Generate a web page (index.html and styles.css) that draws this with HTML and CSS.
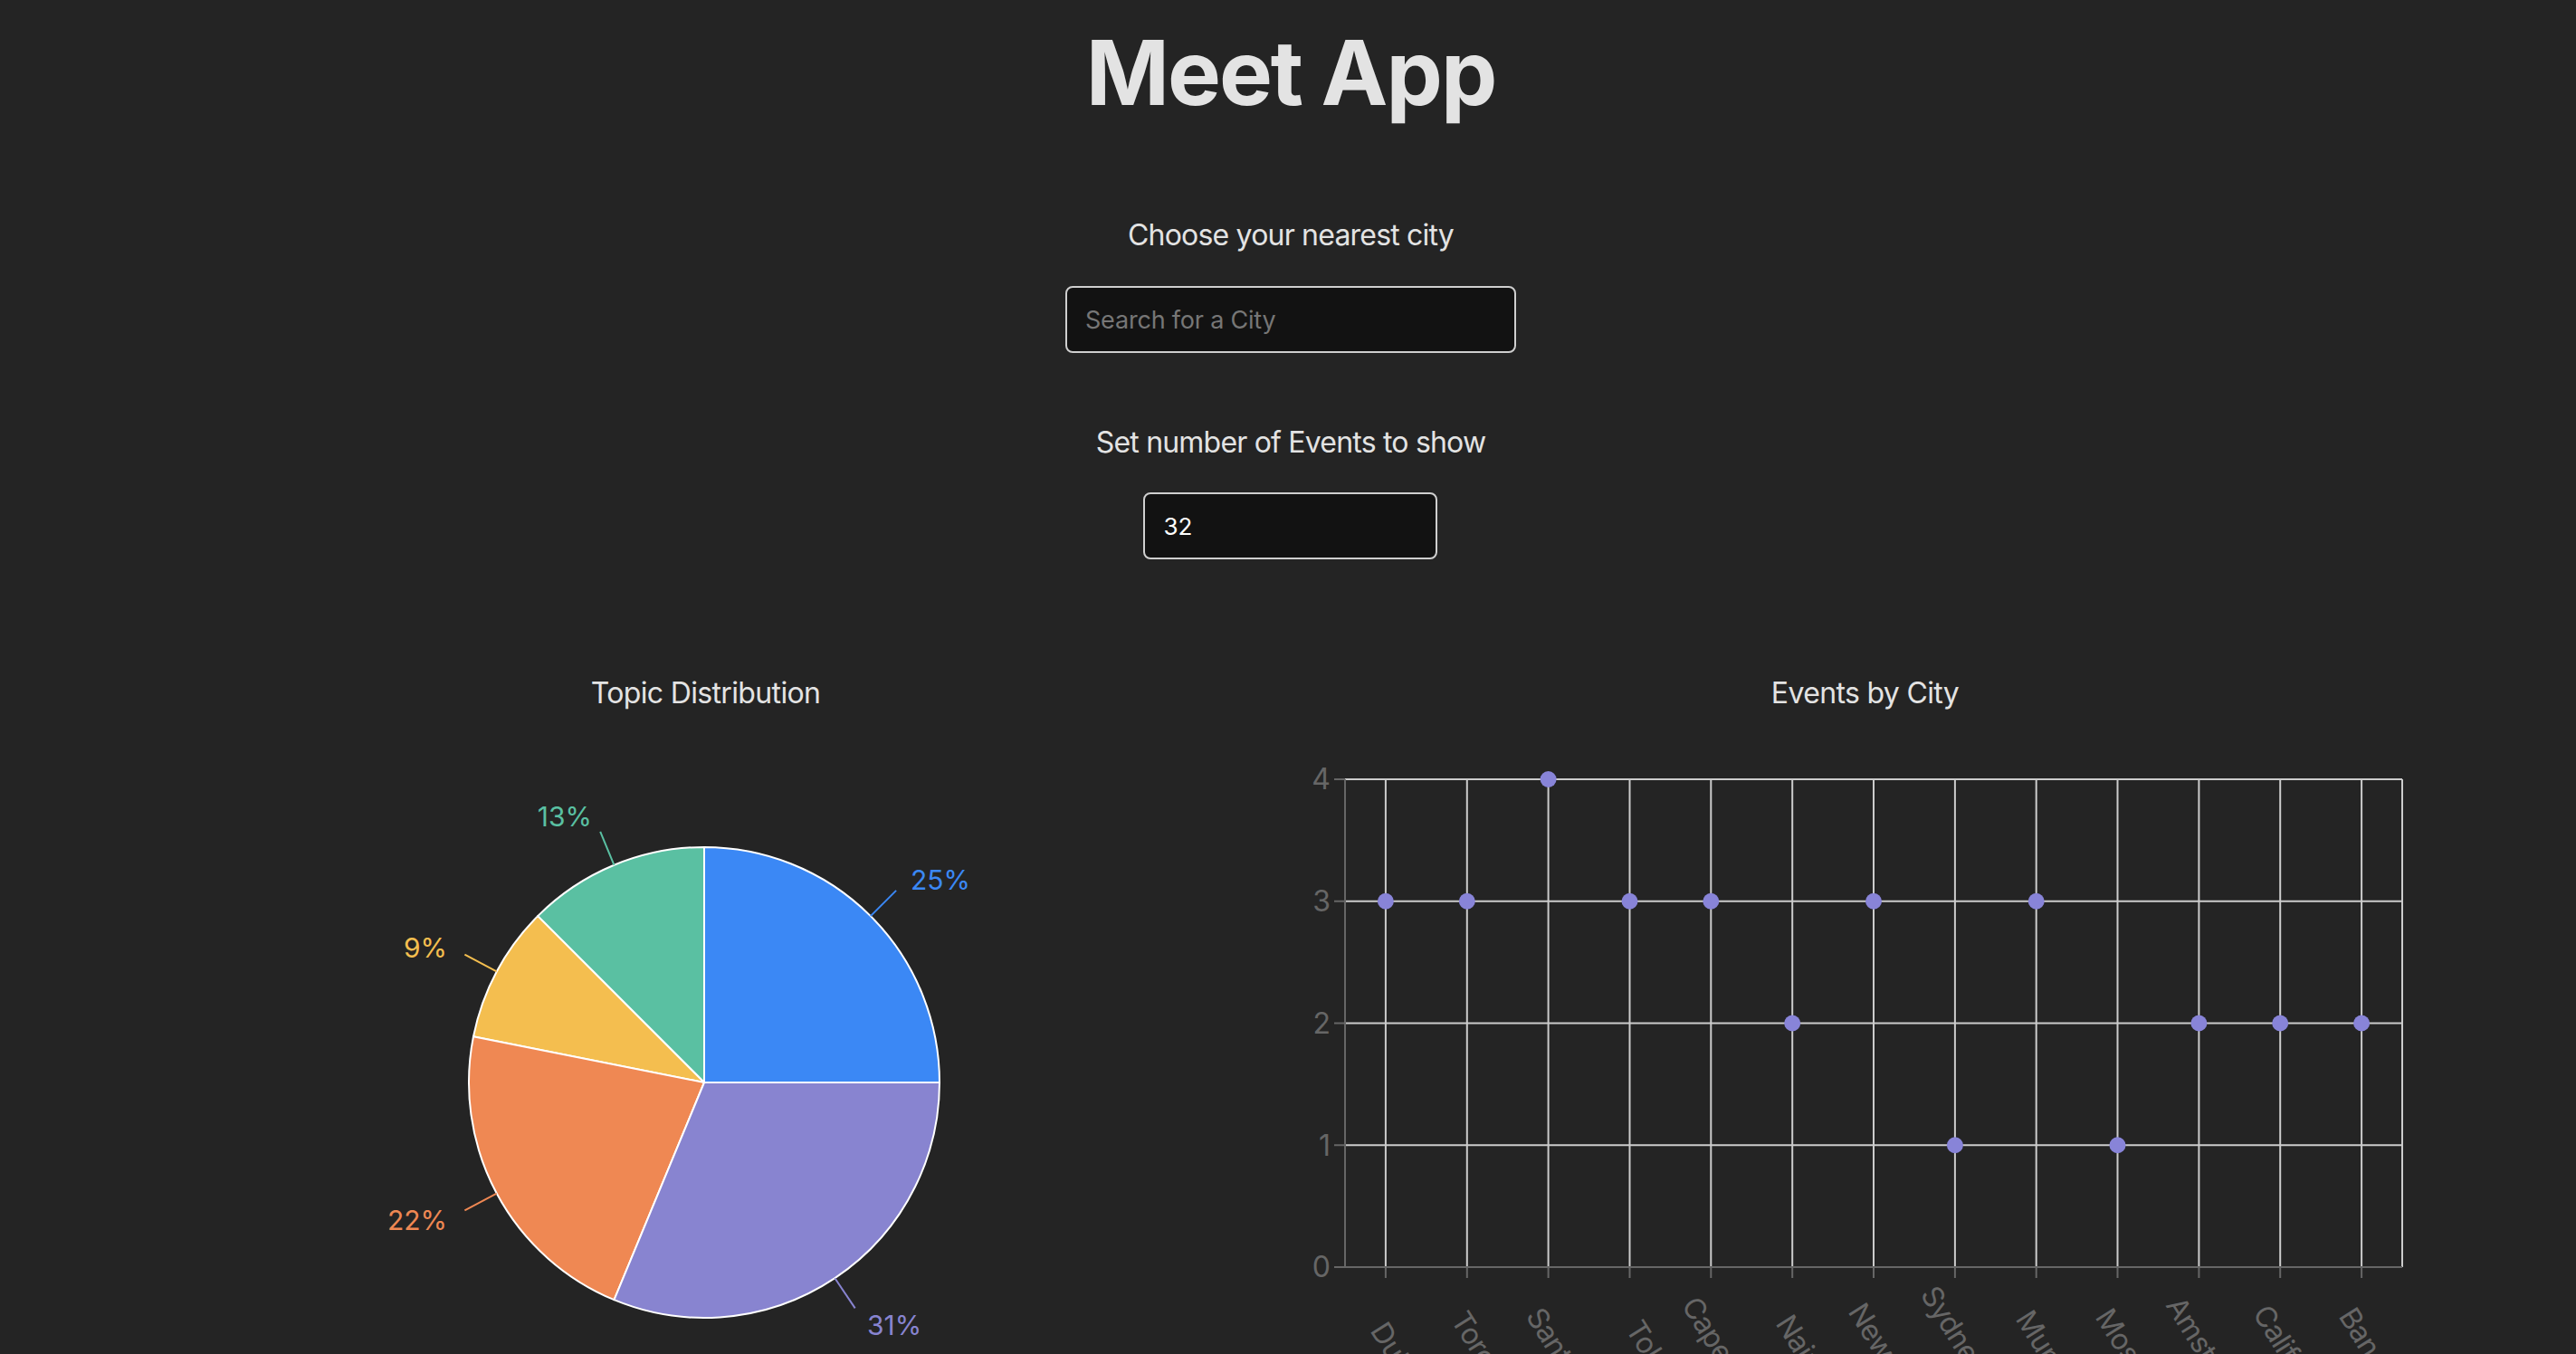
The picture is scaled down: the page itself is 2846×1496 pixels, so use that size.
FILE: index.html
```html
<!DOCTYPE html>
<html lang="en">
<head>
<meta charset="utf-8">
<title>Meet App</title>
<link rel="stylesheet" href="styles.css">
</head>
<body>
<div class="app">
  <div class="controls">
    <h1 class="app-title">Meet App</h1>
    <div class="field city-search">
      <label class="field-label" for="city">Choose your nearest city</label>
      <input id="city" class="text-input city-input" type="text" placeholder="Search for a City">
    </div>
    <div class="field number-events">
      <label class="field-label" for="num">Set number of Events to show</label>
      <input id="num" class="text-input num-input" type="text" value="32">
    </div>
  </div>

  <div class="charts">
    <section class="chart">
      <h2 class="chart-title">Topic Distribution</h2>
      <svg class="chart-svg" width="1281" height="706" viewBox="0 0 1281 706">
        <g class="pie">
          <path fill="#3b88f5" d="M639,406 L899,406 A260,260 0 0,0 639,146 Z"/>
          <path fill="#5ac0a2" d="M639,406 L639,146 A260,260 0 0,0 455.15,222.15 Z"/>
          <path fill="#f4be4f" d="M639,406 L455.15,222.15 A260,260 0 0,0 384,355.28 Z"/>
          <path fill="#ef8853" d="M639,406 L384,355.28 A260,260 0 0,0 539.5,646.2 Z"/>
          <path fill="#8884d0" d="M639,406 L539.5,646.2 A260,260 0 0,0 899,406 Z"/>
        </g>
        <g class="pie-lines">
          <line stroke="#3b88f5" x1="822.85" y1="222.15" x2="851.13" y2="193.87"/>
          <line stroke="#5ac0a2" x1="539.5" y1="165.8" x2="524.2" y2="128.8"/>
          <line stroke="#f4be4f" x1="409.7" y1="283.4" x2="374.4" y2="264.6"/>
          <line stroke="#ef8853" x1="409.7" y1="528.6" x2="374.4" y2="547.4"/>
          <line stroke="#8884d0" x1="783.4" y1="622.2" x2="805.7" y2="655.4"/>
        </g>
        <g class="pie-labels">
          <text fill="#3b88f5" x="867" y="193">25%</text>
          <text fill="#5ac0a2" x="515" y="123" text-anchor="end">13%</text>
          <text fill="#f4be4f" x="355" y="268" text-anchor="end">9%</text>
          <text fill="#ef8853" x="355" y="569" text-anchor="end">22%</text>
          <text fill="#8884d0" x="819" y="685">31%</text>
        </g>
      </svg>
    </section>

    <section class="chart">
      <h2 class="chart-title">Events by City</h2>
      <svg class="chart-svg" width="1281" height="706" viewBox="0 0 1281 706">
        <g class="grid">
          <line x1="66" y1="71" x2="1234" y2="71"/>
          <line x1="66" y1="205.75" x2="1234" y2="205.75"/>
          <line x1="66" y1="340.5" x2="1234" y2="340.5"/>
          <line x1="66" y1="475.25" x2="1234" y2="475.25"/>
          <line x1="110.9" y1="71" x2="110.9" y2="610"/>
          <line x1="200.8" y1="71" x2="200.8" y2="610"/>
          <line x1="290.6" y1="71" x2="290.6" y2="610"/>
          <line x1="380.5" y1="71" x2="380.5" y2="610"/>
          <line x1="470.3" y1="71" x2="470.3" y2="610"/>
          <line x1="560.2" y1="71" x2="560.2" y2="610"/>
          <line x1="650" y1="71" x2="650" y2="610"/>
          <line x1="739.9" y1="71" x2="739.9" y2="610"/>
          <line x1="829.7" y1="71" x2="829.7" y2="610"/>
          <line x1="919.5" y1="71" x2="919.5" y2="610"/>
          <line x1="1009.4" y1="71" x2="1009.4" y2="610"/>
          <line x1="1099.2" y1="71" x2="1099.2" y2="610"/>
          <line x1="1189.1" y1="71" x2="1189.1" y2="610"/>
          <line x1="1234" y1="71" x2="1234" y2="610"/>
        </g>
        <g class="axis">
          <line x1="66" y1="71" x2="66" y2="611"/>
          <line x1="65" y1="610" x2="1234" y2="610"/>
          <line x1="54" y1="71" x2="66" y2="71"/>
          <line x1="54" y1="205.75" x2="66" y2="205.75"/>
          <line x1="54" y1="340.5" x2="66" y2="340.5"/>
          <line x1="54" y1="475.25" x2="66" y2="475.25"/>
          <line x1="54" y1="610" x2="66" y2="610"/>
          <line x1="110.9" y1="610" x2="110.9" y2="622"/>
          <line x1="200.8" y1="610" x2="200.8" y2="622"/>
          <line x1="290.6" y1="610" x2="290.6" y2="622"/>
          <line x1="380.5" y1="610" x2="380.5" y2="622"/>
          <line x1="470.3" y1="610" x2="470.3" y2="622"/>
          <line x1="560.2" y1="610" x2="560.2" y2="622"/>
          <line x1="650" y1="610" x2="650" y2="622"/>
          <line x1="739.9" y1="610" x2="739.9" y2="622"/>
          <line x1="829.7" y1="610" x2="829.7" y2="622"/>
          <line x1="919.5" y1="610" x2="919.5" y2="622"/>
          <line x1="1009.4" y1="610" x2="1009.4" y2="622"/>
          <line x1="1099.2" y1="610" x2="1099.2" y2="622"/>
          <line x1="1189.1" y1="610" x2="1189.1" y2="622"/>
        </g>
        <g class="tick-labels y-labels">
          <text x="50" y="71" dy="0.355em">4</text>
          <text x="50" y="205.75" dy="0.355em">3</text>
          <text x="50" y="340.5" dy="0.355em">2</text>
          <text x="50" y="475.25" dy="0.355em">1</text>
          <text x="50" y="610" dy="0.355em">0</text>
        </g>
        <g class="tick-labels x-labels">
          <text x="93" y="680" transform="rotate(58 93 680)">Dubai, UAE</text>
          <text x="182" y="668" transform="rotate(58 182 668)">Toronto, Canada</text>
          <text x="265" y="664" transform="rotate(58 265 664)">Santiago, Chile</text>
          <text x="375" y="678" transform="rotate(58 375 678)">Tokyo, Japan</text>
          <text x="437" y="652" transform="rotate(58 437 652)">Cape Town, South Africa</text>
          <text x="541" y="672" transform="rotate(58 541 672)">Nairobi, Kenya</text>
          <text x="621" y="659" transform="rotate(58 621 659)">New York, USA</text>
          <text x="701" y="640" transform="rotate(58 701 640)">Sydney, Australia</text>
          <text x="806" y="667" transform="rotate(58 806 667)">Mumbai, India</text>
          <text x="894" y="665" transform="rotate(58 894 665)">Moscow, Russia</text>
          <text x="972" y="652" transform="rotate(58 972 652)">Amsterdam, Netherlands</text>
          <text x="1068" y="661" transform="rotate(58 1068 661)">California, USA</text>
          <text x="1163" y="664" transform="rotate(58 1163 664)">Bangkok, Thailand</text>
        </g>
        <g class="dots">
          <circle cx="110.9" cy="205.75" r="9"/>
          <circle cx="200.8" cy="205.75" r="9"/>
          <circle cx="290.6" cy="71" r="9"/>
          <circle cx="380.5" cy="205.75" r="9"/>
          <circle cx="470.3" cy="205.75" r="9"/>
          <circle cx="560.2" cy="340.5" r="9"/>
          <circle cx="650" cy="205.75" r="9"/>
          <circle cx="739.9" cy="475.25" r="9"/>
          <circle cx="829.7" cy="205.75" r="9"/>
          <circle cx="919.5" cy="475.25" r="9"/>
          <circle cx="1009.4" cy="340.5" r="9"/>
          <circle cx="1099.2" cy="340.5" r="9"/>
          <circle cx="1189.1" cy="340.5" r="9"/>
        </g>
      </svg>
    </section>
  </div>
</div>
</body>
</html>
```

FILE: styles.css
```css
html, body {
  margin: 0;
  padding: 0;
}

body {
  background: #242424;
  color: rgba(255, 255, 255, 0.87);
  font-family: Inter, "Noto Sans", "Liberation Sans", sans-serif;
  overflow: hidden;
}

.app {
  display: flex;
  flex-direction: column;
  width: 100%;
}

.controls {
  display: flex;
  flex-direction: column;
  align-items: center;
  padding-left: 6px;
}

.app-title {
  margin: 26px 0 0;
  font-size: 99px;
  line-height: 109px;
  font-weight: 700;
  letter-spacing: -2px;
  color: #e3e3e3;
}

.field {
  display: flex;
  flex-direction: column;
  align-items: center;
}

.city-search {
  margin-top: 101px;
  gap: 32px;
}

.number-events {
  margin-top: 75px;
  gap: 31px;
}

.field-label {
  display: block;
  font-size: 32px;
  line-height: 48px;
  letter-spacing: -0.8px;
  color: #e3e3e3;
}

.text-input {
  box-sizing: border-box;
  height: 74px;
  border: 2px solid #cfcfcf;
  border-radius: 8px;
  background: #121212;
  color: #ffffff;
  font-family: Inter, "Noto Sans", sans-serif;
  padding: 0 20px;
  outline: none;
}

.city-input {
  width: 498px;
  font-size: 27px;
  letter-spacing: -0.2px;
}

.city-input::placeholder {
  color: #767676;
}

.num-input {
  width: 325px;
  font-size: 26px;
}

.charts {
  box-sizing: border-box;
  width: 100%;
  margin-top: 124px;
  padding: 0 145px 0 139px;
  display: grid;
  grid-template-columns: 1fr 1fr;
}

.chart {
  display: flex;
  flex-direction: column;
}

.chart-title {
  margin: 0;
  font-size: 32px;
  line-height: 48px;
  font-weight: 400;
  letter-spacing: -0.65px;
  text-align: center;
  color: #e3e3e3;
}

.chart-svg {
  display: block;
}

.pie path {
  stroke: #ffffff;
  stroke-width: 2;
  stroke-linejoin: round;
}

.pie-lines line {
  stroke-width: 2;
}

.pie-labels text {
  font-family: Inter, "Noto Sans", sans-serif;
  font-size: 30px;
}

.grid line {
  stroke: #cccccc;
  stroke-width: 2;
}

.axis line {
  stroke: #666666;
  stroke-width: 2;
}

.tick-labels text {
  font-family: Inter, "Noto Sans", sans-serif;
  font-size: 32px;
  fill: #666666;
}

.x-labels text {
  letter-spacing: -0.8px;
}

.y-labels text {
  text-anchor: end;
}

.dots circle {
  fill: #8884d8;
}
```
